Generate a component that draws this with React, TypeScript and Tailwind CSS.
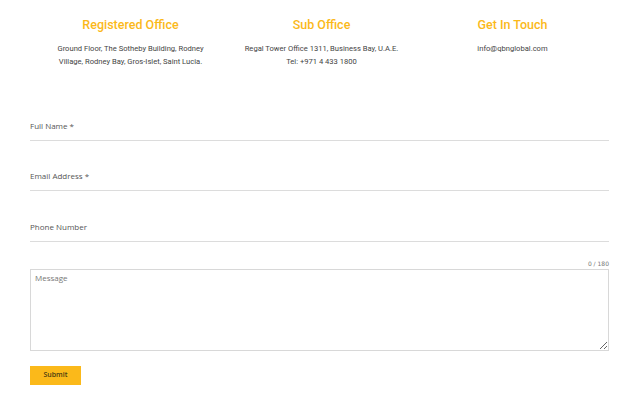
export default function App() {
  const offices = [
    {
      title: "Registered Office",
      lines: ["Ground Floor, The Sotheby Building, Rodney", "Village, Rodney Bay, Gros-Islet, Saint Lucia."],
    },
    {
      title: "Sub Office",
      lines: ["Regal Tower Office 1311, Business Bay, U.A.E.", "Tel: +971 4 433 1800"],
    },
    {
      title: "Get In Touch",
      lines: ["info@qbnglobal.com"],
    },
  ];

  const fields = ["Full Name *", "Email Address *", "Phone Number"];

  return (
    <div className="w-[639px] h-[398px] bg-white overflow-hidden">
      {/* Offices */}
      <div className="grid grid-cols-3 pl-[35px] pr-[31px] pt-[17px]">
        {offices.map((o, i) => (
          <div key={i} className="flex flex-col items-center text-center">
            <h3 className="font-['Roboto',sans-serif] font-medium text-[12.5px] leading-[16px] text-[#fbb91a]">
              {o.title}
            </h3>
            <div className="mt-[9px] font-['Roboto',sans-serif] text-[7.6px] leading-[13px] text-[#444] whitespace-nowrap">
              {o.lines.map((l, j) => (
                <p key={j}>{l}</p>
              ))}
            </div>
          </div>
        ))}
      </div>

      {/* Form */}
      <form className="px-[30px] pt-[22px] font-['Open_Sans',sans-serif]">
        {fields.map((f, i) => (
          <div
            key={i}
            className="h-[50.5px] flex items-end pb-[8px] border-b border-[#dcdcdc]"
          >
            <label className="text-[8px] leading-[12px] text-[#555]">{f}</label>
          </div>
        ))}

        <div className="mt-[18px] text-right text-[6px] leading-[8px] text-[#777] font-['DejaVu_Sans',sans-serif]">
          0 / 180
        </div>
        <textarea
          placeholder="Message"
          className="mt-[1px] block w-full h-[82px] border-[1.5px] border-[#d8d8d8] px-[4px] py-[2px] text-[8px] leading-[12px] text-[#555] placeholder:text-[#777] outline-none"
        />

        <button
          type="button"
          className="mt-[15px] w-[51px] h-[19px] bg-[#fbb91a] text-[7px] font-semibold text-[#4a3a10]"
        >
          Submit
        </button>
      </form>
    </div>
  );
}
